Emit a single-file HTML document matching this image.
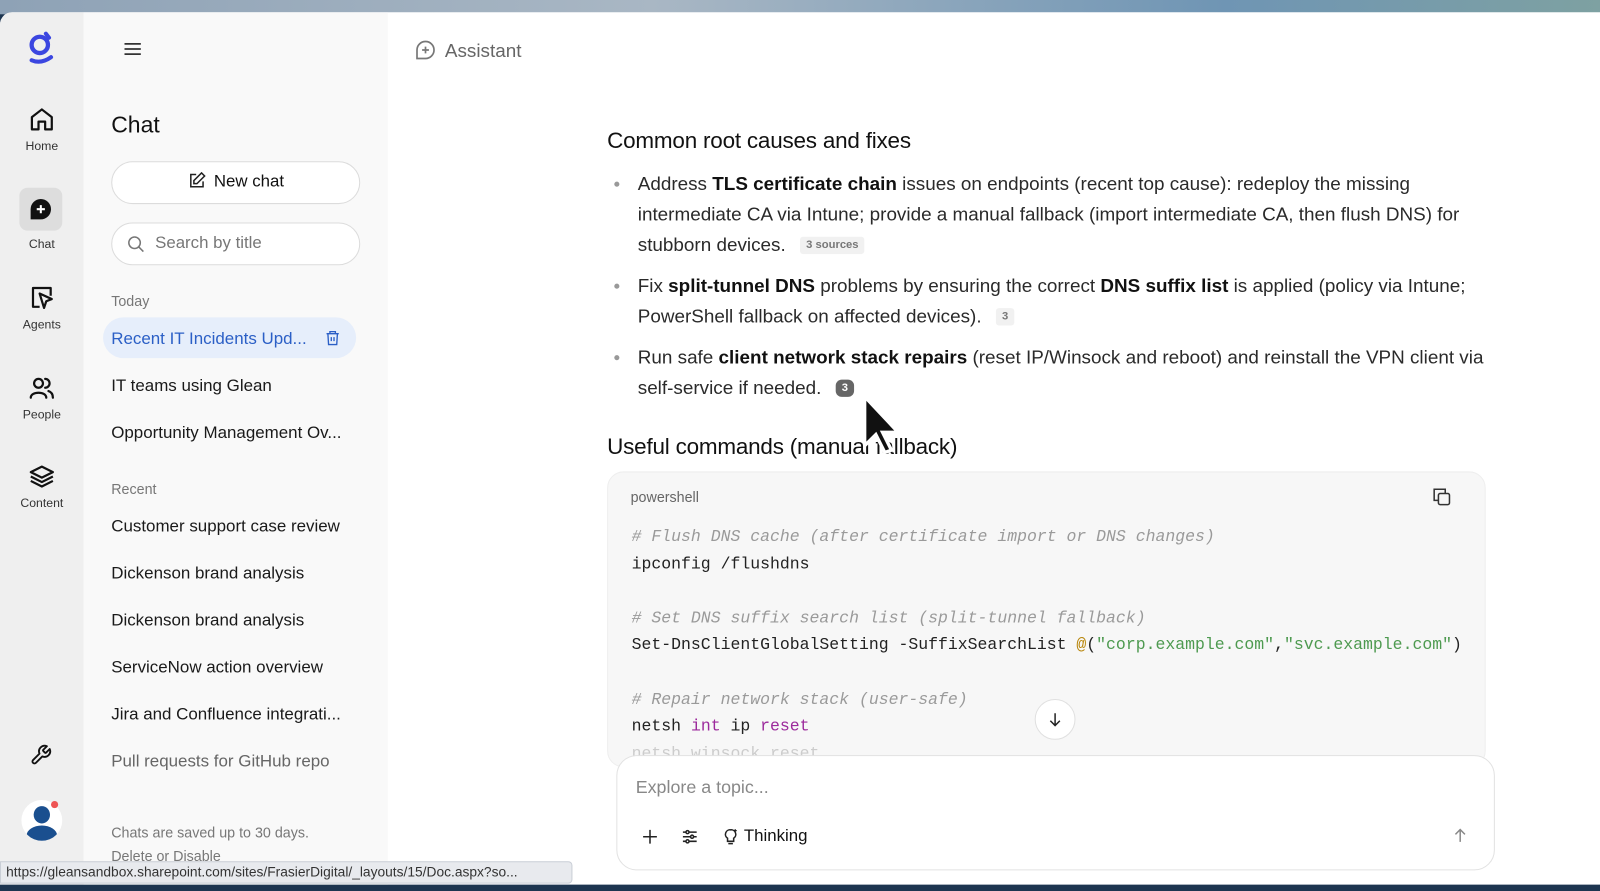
<!DOCTYPE html>
<html><head><meta charset="utf-8">
<style>
*{box-sizing:border-box;margin:0;padding:0}
html,body{width:1600px;height:891px;overflow:hidden}
body{font-family:"Liberation Sans",sans-serif;background:#1d3550;position:relative;color:#1a1a1a}
.wrap{position:absolute;left:0;top:0;width:1600px;height:891px;transform:scale(1.0204);transform-origin:0 0}
.top{position:absolute;left:0;top:0;width:1600px;height:14px;background:linear-gradient(90deg,#8ea2b6,#a9b7c4 40%,#6f95b4 75%,#7fa2a0)}
.win{position:absolute;left:0;top:12px;width:1600px;height:855px;background:#fff;border-top-left-radius:12px;overflow:hidden}
.rail{position:absolute;left:0;top:0;width:82px;height:100%;background:#efefef}
.side{position:absolute;left:82px;top:0;width:298px;height:100%;background:#f9f9f9}
.abs{position:absolute}
.nav{position:absolute;left:0;width:82px;text-align:center;font-size:12px;color:#333}
.nav svg{display:block;margin:0 auto 6px}
.item{position:absolute;left:109px;font-size:16.6px;color:#1a1a1a;white-space:nowrap}
.sec{position:absolute;left:109px;font-size:14px;color:#777}
.main{position:absolute;left:595px;font-size:18.5px;color:#2a2a2a}
.main b{color:#111}
h2{position:absolute;left:595px;font-size:22px;font-weight:normal;color:#111;letter-spacing:-.2px}
ul{list-style:none}
li{position:relative;padding-left:30px;line-height:30px;margin-bottom:10px;width:870px}
li:before{content:"";position:absolute;left:7px;top:13px;width:5px;height:5px;border-radius:50%;background:#999}
.badge{display:inline-block;font-size:11px;font-weight:bold;color:#777;background:#f1f1f1;padding:1px 6px;margin-left:14px;vertical-align:3px;border-radius:3px;line-height:15px}
.code{position:absolute;left:595px;top:450px;width:861px;height:290px;background:#f7f7f7;border:1px solid #eee;border-radius:16px}
pre{font-family:"Liberation Mono",monospace;font-size:16.15px;line-height:26.6px;color:#222;position:absolute;left:23px;top:50px}
.c{color:#9a9a9a;font-style:italic}.k{color:#9c2a9c}.s{color:#4e9a50}.a{color:#b8860b}
.input{position:absolute;left:604px;top:728px;width:861px;height:113px;background:#fff;border:1.5px solid #e2e2e2;border-radius:20px}
</style></head><body>
<div class="wrap">
<div class="top"></div>
<div class="win">
 <div class="rail"></div>
 <div class="side"></div>
 <svg class="abs" style="left:26px;top:19px" width="28" height="34" viewBox="0 0 28 34"><circle cx="13" cy="13" r="8" fill="none" stroke="#3b46e0" stroke-width="4.2"/><path d="M19 2 L22 6" stroke="#3b46e0" stroke-width="4" stroke-linecap="round"/><path d="M5 28 Q14 32 24 25" fill="none" stroke="#3b46e0" stroke-width="4" stroke-linecap="round"/></svg>
 <div class="nav" style="top:92px"><svg width="26" height="26" viewBox="0 0 24 24" fill="none" stroke="#111" stroke-width="2" stroke-linejoin="round"><path d="M3 10 L12 3 L21 10 V21 H15 V14 H9 V21 H3 Z"/></svg>Home</div>
 <div class="abs" style="left:19px;top:172px;width:42px;height:42px;background:#ddd;border-radius:8px"></div>
 <svg class="abs" style="left:29px;top:182px" width="22" height="22" viewBox="0 0 22 22"><path d="M11 1 A10 10 0 1 1 11 21 H1 V11 A10 10 0 0 1 11 1Z" fill="#111"/><path d="M11 7V15M7 11H15" stroke="#fff" stroke-width="2"/></svg>
 <div class="nav" style="top:220px">Chat</div>
 <div class="nav" style="top:267px"><svg width="26" height="26" viewBox="0 0 24 24" fill="none" stroke="#111" stroke-width="2" stroke-linejoin="round"><path d="M10 20 H4 V3 H20 V10"/><path d="M10 8 L21 13 L16 15 L14 21 Z"/></svg>Agents</div>
 <div class="nav" style="top:355px"><svg width="26" height="26" viewBox="0 0 24 24" fill="none" stroke="#111" stroke-width="2" stroke-linecap="round"><circle cx="9" cy="8" r="4"/><path d="M2 21 C2 15 16 15 16 21"/><path d="M15 4 A4 4 0 0 1 15 12M18 15 C21 16 22 18 22 21"/></svg>People</div>
 <div class="nav" style="top:442px"><svg width="26" height="26" viewBox="0 0 24 24" fill="none" stroke="#111" stroke-width="2" stroke-linejoin="round"><path d="M12 3 L22 8 L12 13 L2 8 Z"/><path d="M2 12 L12 17 L22 12M2 16 L12 21 L22 16"/></svg>Content</div>
 <svg class="abs" style="left:29px;top:717px" width="22" height="22" viewBox="0 0 24 24" fill="none" stroke="#111" stroke-width="2" stroke-linejoin="round"><path d="M14.7 6.3a1 1 0 0 0 0 1.4l1.6 1.6a1 1 0 0 0 1.4 0l3.8-3.8a6 6 0 0 1-7.9 7.9l-6.9 6.9a2.1 2.1 0 0 1-3-3l6.9-6.9a6 6 0 0 1 7.9-7.9z"/></svg>
 <div class="abs" style="left:21px;top:772px;width:40px;height:40px;border-radius:50%;background:#fff;overflow:hidden"><div class="abs" style="left:12px;top:6px;width:16px;height:17px;border-radius:50%;background:#1a4f8f"></div><div class="abs" style="left:5px;top:25px;width:30px;height:20px;border-radius:50% 50% 0 0;background:#1a4f8f"></div></div>
 <div class="abs" style="left:50px;top:773px;width:7px;height:7px;border-radius:50%;background:#e55"></div>

 <svg class="abs" style="left:121px;top:29px" width="18" height="14" viewBox="0 0 18 14" stroke="#333" stroke-width="1.7"><path d="M1 2H17M1 7H17M1 12H17"/></svg>
 <div class="abs" style="left:109px;top:98px;font-size:22.5px;color:#111">Chat</div>
 <div class="abs" style="left:109px;top:146px;width:244px;height:42px;border:1.5px solid #dcdcdc;border-radius:21px;background:#fff;text-align:center;font-size:16.5px;line-height:39px;color:#111"><svg style="vertical-align:-3px;margin-right:8px" width="18" height="18" viewBox="0 0 24 24" fill="none" stroke="#222" stroke-width="2"><path d="M11 4H4V20H20V13"/><path d="M18 2 L22 6 L12 16 H8 V12 Z"/></svg>New chat</div>
 <div class="abs" style="left:109px;top:206px;width:244px;height:42px;border:1.5px solid #dcdcdc;border-radius:21px;background:#fff;font-size:16.5px;line-height:39px;color:#777;padding-left:42px"><svg class="abs" style="left:14px;top:11px" width="18" height="18" viewBox="0 0 24 24" fill="none" stroke="#777" stroke-width="2"><circle cx="10.5" cy="10.5" r="7.5"/><path d="M16 16L22 22"/></svg>Search by title</div>
 <div class="sec" style="top:275px">Today</div>
 <div class="abs" style="left:101px;top:299px;width:248px;height:40px;background:#e6eefb;border-radius:20px"></div>
 <div class="item" style="top:310px;color:#2b5fc6">Recent IT Incidents Upd...</div>
 <svg class="abs" style="left:318px;top:311px" width="16" height="16" viewBox="0 0 24 24" fill="none" stroke="#2b5fc6" stroke-width="2"><path d="M3 6H21M8 6V3H16V6M5 6L6 22H18L19 6M10 11V17M14 11V17"/></svg>
 <div class="item" style="top:356px">IT teams using Glean</div>
 <div class="item" style="top:402px">Opportunity Management Ov...</div>
 <div class="sec" style="top:459px">Recent</div>
 <div class="item" style="top:494px">Customer support case review</div>
 <div class="item" style="top:540px">Dickenson brand analysis</div>
 <div class="item" style="top:586px">Dickenson brand analysis</div>
 <div class="item" style="top:632px">ServiceNow action overview</div>
 <div class="item" style="top:678px">Jira and Confluence integrati...</div>
 <div class="item" style="top:724px;color:#666">Pull requests for GitHub repo</div>
 <div class="sec" style="top:796px">Chats are saved up to 30 days.</div>
 <div class="sec" style="top:819px">Delete or Disable</div>

 <svg class="abs" style="left:407px;top:27px" width="20" height="20" viewBox="0 0 24 24" fill="none" stroke="#777" stroke-width="2"><path d="M12 2 A10 10 0 1 1 12 22 H2 V12 A10 10 0 0 1 12 2Z"/><path d="M12 8V16M8 12H16"/></svg>
 <div class="abs" style="left:436px;top:27px;font-size:18.5px;color:#666">Assistant</div>

 <h2 style="top:113px">Common root causes and fixes</h2>
 <ul class="main" style="top:153px">
  <li>Address <b>TLS certificate chain</b> issues on endpoints (recent top cause): redeploy the missing intermediate CA via Intune; provide a manual fallback (import intermediate CA, then flush DNS) for stubborn devices.<span class="badge">3 sources</span></li>
  <li>Fix <b>split-tunnel DNS</b> problems by ensuring the correct <b>DNS suffix list</b> is applied (policy via Intune; PowerShell fallback on affected devices).<span class="badge">3</span></li>
  <li>Run safe <b>client network stack repairs</b> (reset IP/Winsock and reboot) and reinstall the VPN client via self-service if needed.<span class="badge" style="background:#666;color:#fff;border-radius:6px">3</span></li>
 </ul>
 <h2 style="top:413px">Useful commands (manual fallback)</h2>
 <div class="code">
  <div class="abs" style="left:22px;top:16px;font-size:14px;color:#666">powershell</div>
  <svg class="abs" style="left:807px;top:14px" width="20" height="20" viewBox="0 0 24 24" fill="none" stroke="#333" stroke-width="1.8"><rect x="8" y="8" width="13" height="13" rx="2"/><path d="M16 8V3H3V16H8"/></svg>
<pre><span class="c"># Flush DNS cache (after certificate import or DNS changes)</span>
ipconfig /flushdns

<span class="c"># Set DNS suffix search list (split-tunnel fallback)</span>
Set-DnsClientGlobalSetting -SuffixSearchList <span class="a">@</span>(<span class="s">"corp.example.com"</span>,<span class="s">"svc.example.com"</span>)

<span class="c"># Repair network stack (user-safe)</span>
netsh <span class="k">int</span> ip <span class="k">reset</span>
<span style="color:#ccc">netsh winsock reset</span></pre>
 </div>
 <div class="abs" style="left:1014px;top:673px;width:40px;height:40px;border-radius:50%;background:#fff;border:1px solid #e0e0e0"><svg class="abs" style="left:11px;top:11px" width="16" height="16" viewBox="0 0 24 24" fill="none" stroke="#222" stroke-width="2.2"><path d="M12 3V21M5 14L12 21L19 14"/></svg></div>
 <div class="input">
  <div class="abs" style="left:18px;top:20px;font-size:17.5px;color:#888">Explore a topic...</div>
  <svg class="abs" style="left:23px;top:70px" width="18" height="18" viewBox="0 0 24 24" stroke="#222" stroke-width="2"><path d="M12 3V21M3 12H21"/></svg>
  <svg class="abs" style="left:62px;top:70px" width="18" height="18" viewBox="0 0 24 24" fill="none" stroke="#222" stroke-width="2"><path d="M3 6H21M3 12H21M3 18H21"/><circle cx="9" cy="6" r="2" fill="#fff"/><circle cx="15" cy="12" r="2" fill="#fff"/><circle cx="9" cy="18" r="2" fill="#fff"/></svg>
  <svg class="abs" style="left:102px;top:69px" width="18" height="20" viewBox="0 0 24 24" fill="none" stroke="#222" stroke-width="2"><path d="M9 21H15M12 3A6 6 0 0 0 8 14V18H16V14A6 6 0 0 0 12 3Z"/><path d="M18 2V6M16 4H20" stroke-width="1.6"/></svg>
  <div class="abs" style="left:124px;top:69px;font-size:16.5px;color:#111">Thinking</div>
  <svg class="abs" style="left:818px;top:70px" width="16" height="16" viewBox="0 0 24 24" fill="none" stroke="#888" stroke-width="2.2"><path d="M12 21V3M5 10L12 3L19 10"/></svg>
 </div>
 <div class="abs" style="left:0;top:832px;width:561px;height:22px;background:#e8eaee;border:1px solid #c9ced6;border-radius:0 4px 4px 0;font-size:13.5px;color:#333;line-height:20px;padding-left:5px">https://gleansandbox.sharepoint.com/sites/FrasierDigital/_layouts/15/Doc.aspx?so...</div>
 <svg class="abs" style="left:843px;top:372px" width="46" height="64" viewBox="0 0 21 29"><path d="M2 2 L2 24 L7 19 L11 27 L14 26 L10 18 L17 18 Z" fill="#111" stroke="#fff" stroke-width="1.5"/></svg>
</div>
</div>
</body></html>
